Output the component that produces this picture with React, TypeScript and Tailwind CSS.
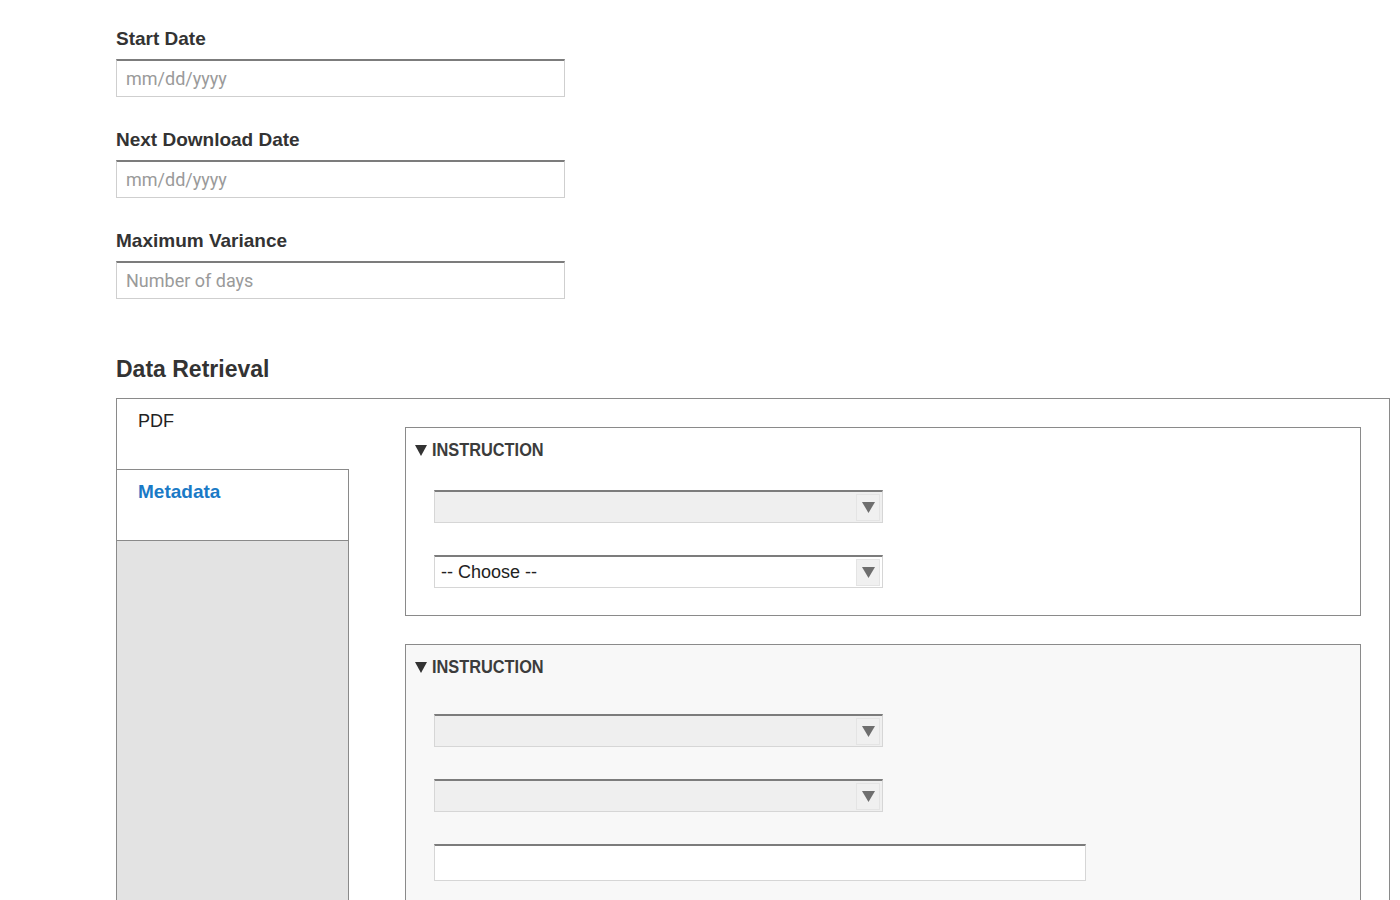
import type React from 'react'

const font = { fontFamily: '"Liberation Sans", Arial, sans-serif' }

const Field: React.FC<{ label: string; placeholder: string; first?: boolean }> = ({ label, placeholder, first }) => (
	<div className={first ? '' : 'mt-[32px]'}>
		<div className="text-[19px] leading-[22px] font-bold text-[#333]">{label}</div>
		<div className="mt-[9px] w-[449px] h-[38px] border border-[#cfcfcf] border-t-2 border-t-[#7c7c7c] bg-white flex items-center px-[9px]">
			<span className="text-[18px] text-[#9a9a9a]" style={{ fontFamily: 'Roboto, "Liberation Sans", sans-serif' }}>
				{placeholder}
			</span>
		</div>
	</div>
)

const Select: React.FC<{ value?: string; className?: string }> = ({ value, className }) => (
	<div
		className={`w-[449px] h-[33px] border border-[#d6d6d6] border-t-2 border-t-[#7c7c7c] flex items-center justify-between pl-[6px] pr-[2px] ${
			value ? 'bg-white' : 'bg-[#efefef]'
		} ${className ?? ''}`}
	>
		<span className="text-[18px] text-[#222]">{value ?? ''}</span>
		<span className="w-[24px] h-[27px] bg-[#f0f0f0] border border-[#e4e4e4] flex items-center justify-center">
			<svg width="13" height="11" viewBox="0 0 13 11">
				<path d="M0 0 H13 L6.5 11 Z" fill="#6e6e6e" />
			</svg>
		</span>
	</div>
)

const Header: React.FC = () => (
	<div className="flex items-center gap-[5px] text-[#3c3c3c]">
		<svg width="12" height="11" viewBox="0 0 12 11">
			<path d="M0 0 H12 L6 11 Z" fill="#333" />
		</svg>
		<span className="inline-block text-[19px] font-bold leading-[22px] origin-left scale-x-[0.86]">INSTRUCTION</span>
	</div>
)

export default function App() {
	return (
		<div className="bg-white h-[900px] overflow-hidden pl-[116px] pt-[28px]" style={font}>
			<Field label="Start Date" placeholder="mm/dd/yyyy" first />
			<Field label="Next Download Date" placeholder="mm/dd/yyyy" />
			<Field label="Maximum Variance" placeholder="Number of days" />

			<h2 className="mt-[57px] text-[23px] leading-[26px] font-bold text-[#333]">Data Retrieval</h2>

			<div className="mt-[16px] w-[1274px] border border-[#8a8a8a] border-b-0 flex h-[600px]">
				<div className="w-[232px] flex flex-col shrink-0">
					<div className="h-[70px] pl-[21px] pt-[11px] text-[18px] leading-[22px] text-[#222]">PDF</div>
					<div className="h-[72px] border-y border-r border-[#8a8a8a] bg-white pl-[21px] pt-[11px] text-[19px] leading-[22px] font-bold text-[#1a7ac6]">
						Metadata
					</div>
					<div className="flex-1 bg-[#e3e3e3] border-r border-[#8a8a8a]" />
				</div>

				<div className="flex-1 pl-[56px] pt-[28px] pr-[28px]">
					<div className="h-[189px] border border-[#8a8a8a] bg-white pl-[9px] pt-[11px]">
						<Header />
						<div className="pl-[19px]">
							<Select className="mt-[29px]" />
							<Select className="mt-[32px]" value="-- Choose --" />
						</div>
					</div>

					<div className="mt-[28px] h-[400px] border border-[#8a8a8a] border-b-0 bg-[#f8f8f8] pl-[9px] pt-[11px]">
						<Header />
						<div className="pl-[19px]">
							<Select className="mt-[36px]" />
							<Select className="mt-[32px]" />
							<div className="mt-[32px] w-[652px] h-[37px] border border-[#d6d6d6] border-t-2 border-t-[#7c7c7c] bg-white" />
						</div>
					</div>
				</div>
			</div>
		</div>
	)
}
